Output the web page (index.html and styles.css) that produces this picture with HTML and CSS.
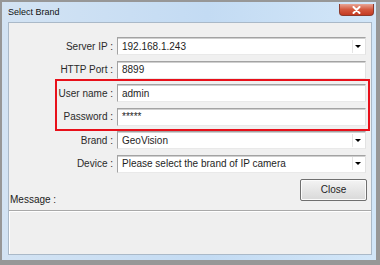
FILE: index.html
```html
<!DOCTYPE html>
<html lang="en">
<head>
    <meta charset="UTF-8">
    <title>Select Brand</title>
    <link rel="stylesheet" href="styles.css">
</head>
<body>
    <div class="window">
        <div class="titlebar">
            <span class="title">Select Brand</span>
            <span class="close-x">
                <svg width="9" height="8" viewBox="0 0 9 8"><path d="M1.5 1 L7.5 7 M7.5 1 L1.5 7" stroke="#fff" stroke-width="2" stroke-linecap="round"/></svg>
            </span>
        </div>

        <div class="client">
            <div class="fields">
                <div class="row">
                    <label>Server IP :</label>
                    <div class="box combo"><span class="value">192.168.1.243</span><span class="arrow"></span></div>
                </div>
                <div class="row">
                    <label>HTTP Port :</label>
                    <div class="box"><span class="value">8899</span></div>
                </div>
                <div class="highlight">
                    <div class="row">
                        <label>User name :</label>
                        <div class="box"><span class="value">admin</span></div>
                    </div>
                    <div class="row">
                        <label>Password :</label>
                        <div class="box"><span class="value">*****</span></div>
                    </div>
                </div>
                <div class="row">
                    <label>Brand :</label>
                    <div class="box combo"><span class="value">GeoVision</span><span class="arrow"></span></div>
                </div>
                <div class="row">
                    <label>Device :</label>
                    <div class="box combo"><span class="value">Please select the brand of IP camera</span><span class="arrow"></span></div>
                </div>
            </div>

            <div class="actions">
                <span class="msg-label">Message :</span>
                <button class="btn" type="button">Close</button>
            </div>

            <div class="message-box"></div>
        </div>
    </div>
</body>
</html>
```

FILE: styles.css
```css
/* --- Base --- */
* { box-sizing: border-box; }
html, body { margin: 0; height: 100%; }
body {
    background-color: #979797;
    font-family: 'Liberation Sans', Arial, sans-serif;
    font-size: 10px;
    color: #1e1e1e;
    overflow: hidden;
}

/* --- Window frame --- */
.window {
    width: 374px;
    height: 258px;
    margin: 2px 4px 5px 2px;
    display: flex;
    flex-direction: column;
    padding-bottom: 5px;
    background: linear-gradient(to right, #d3e3f3, #c3dbf3 55%, #d2e6f8);
}
.titlebar {
    height: 20px;
    flex: none;
    display: flex;
    justify-content: space-between;
    align-items: flex-start;
    padding: 0 2px 0 6px;
}
.title { font-size: 9px; line-height: 20px; color: #111; }
.close-x {
    width: 35px;
    height: 12px;
    margin-top: 2px;
    display: flex;
    align-items: center;
    justify-content: center;
    border: 1px solid #8c3a2c;
    border-top: none;
    border-radius: 0 0 4px 4px;
    background: linear-gradient(#e7a595, #d4593f 50%, #c43b22);
}

/* --- Client area --- */
.client {
    flex: 1;
    margin: 0 4px 0 6px;
    display: flex;
    flex-direction: column;
    background-color: #f0f0f0;
    border: 1px solid #aab9c8;
}

.fields {
    display: flex;
    flex-direction: column;
    gap: 5.6px;
    padding: 14px 5px 0 48px;
}
.row { display: flex; align-items: center; height: 18px; gap: 4px; }
.row label { width: 56px; flex: none; text-align: right; color: #2a2a2a; white-space: nowrap; }

.box {
    flex: 1;
    height: 18px;
    display: flex;
    align-items: center;
    background-color: #fff;
    border: 1px solid;
    border-color: #a3a3a3 #e2e2e2 #e9e9e9 #a3a3a3;
    box-shadow: inset 0 1px 0 #cfcfcf;
}
.box .value { flex: 1; padding-left: 4px; white-space: nowrap; overflow: hidden; }
.combo .arrow {
    width: 11px;
    height: 13px;
    margin-right: 2px;
    display: flex;
    align-items: center;
    justify-content: center;
    border-left: 1px solid #e4e4e4;
}
.combo .arrow::after {
    content: "";
    border-left: 3px solid transparent;
    border-right: 3px solid transparent;
    border-top: 3px solid #000;
}

/* --- Highlight --- */
.highlight {
    display: flex;
    flex-direction: column;
    gap: 5.6px;
    margin: -5.2px -4px -5.2px -2px;
    padding: 3.2px 2px 3.2px 0;
    border: 2px solid #e8101a;
}

/* --- Actions / message --- */
.actions {
    display: flex;
    justify-content: space-between;
    align-items: flex-end;
    margin-top: 6px;
    padding: 0 4px 0 1px;
}
.msg-label { margin-bottom: -4px; color: #222; }
.btn {
    width: 67px;
    height: 22px;
    font-family: inherit;
    font-size: 10px;
    color: #1e1e1e;
    border: 1px solid #6f6f6f;
    border-radius: 2px;
    background: linear-gradient(#f4f4f4, #e6e6e6 50%, #d9d9d9);
    box-shadow: inset 0 0 0 1px #fbfbfb;
    padding: 0;
}

.message-box {
    flex: 1;
    margin-top: 9px;
    border-top: 1px solid #a9a9a9;
    box-shadow: inset 0 1px 0 #fff, inset 1px 0 0 #fff;
    background-color: #efefef;
}
```
